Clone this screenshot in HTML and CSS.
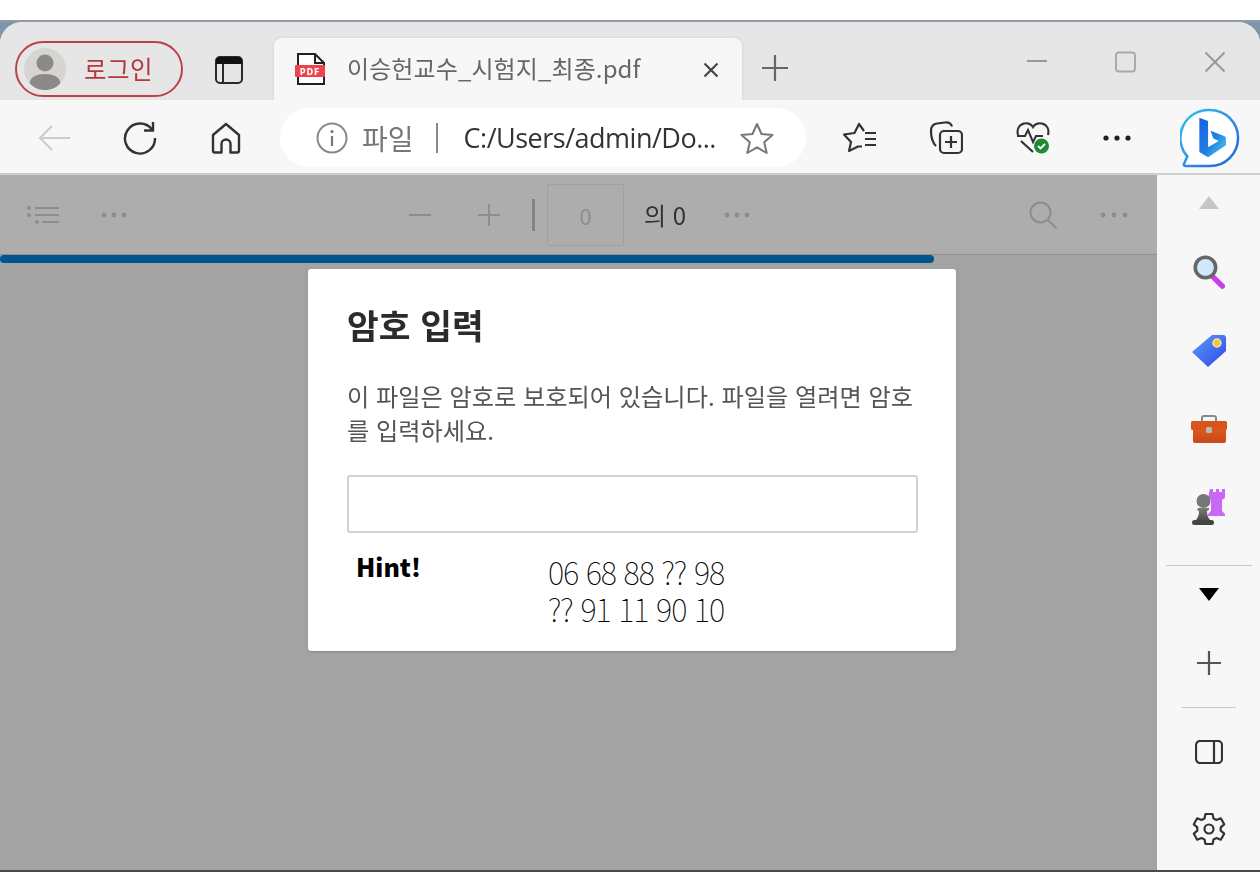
FILE: index.html
```html
<!DOCTYPE html>
<html lang="ko">
<head>
<meta charset="utf-8">
<title>이승헌교수_시험지_최종.pdf</title>
<link rel="stylesheet" href="styles.css">
</head>
<body>
<div class="desktop">
<div class="window">
  <header class="tabstrip">
    <div class="profile">
      <svg class="avatar" width="42" height="42" viewBox="0 0 42 42"><circle cx="21" cy="21" r="21" fill="#d6d5d2"/><circle cx="21" cy="15" r="8.500" fill="#8b8a88"/><path d="M5.500 35c1-6 7-9 15.500-9s14.500 3 15.500 9c-3.500 4.500-9.500 7-15.500 7s-12-2.500-15.500-7z" fill="#8b8a88"/></svg>
      <span class="profile-name">로그인</span>
    </div>
    <svg class="tabs-icon" width="28" height="28" viewBox="0 0 28 28"><rect x="1" y="1" width="26" height="26" rx="4" fill="none" stroke="#2a2a2a" stroke-width="2"/><path d="M1 5a4 4 0 0 1 4-4h18a4 4 0 0 1 4 4v3H1z" fill="#111"/><path d="M8 8v19" stroke="#2a2a2a" stroke-width="2"/></svg>
    <div class="tab">
      <svg class="pdf-icon" width="32" height="32" viewBox="0 0 32 32"><path d="M3 1h17l9 9v21H3z" fill="#fff" stroke="#222" stroke-width="2"/><path d="M20 1v9h9" fill="none" stroke="#222" stroke-width="2"/><rect y="12" width="30" height="12" rx="1" fill="#f0424c"/><text x="15" y="21.500" class="pdf-label" text-anchor="middle">PDF</text></svg>
      <span class="tab-title">이승헌교수_시험지_최종.pdf</span>
      <svg class="tab-close" width="16" height="16" viewBox="0 0 16 16"><path d="M1.500 1.500l13 13M14.500 1.500l-13 13" stroke="#444" stroke-width="2.200"/></svg>
    </div>
    <svg class="new-tab" width="28" height="28" viewBox="0 0 28 28"><path d="M14 1v26M1 14h26" stroke="#666" stroke-width="2.200"/></svg>
    <div class="controls">
      <svg width="22" height="22" viewBox="0 0 22 22"><path d="M1 10h20" stroke="#999" stroke-width="2"/></svg>
      <svg class="ctrl-max" width="22" height="22" viewBox="0 0 22 22"><rect x="2" y="1.500" width="19" height="19" rx="3" fill="none" stroke="#aaa" stroke-width="2"/></svg>
      <svg class="ctrl-close" width="22" height="22" viewBox="0 0 22 22"><path d="M1.500 1.500l19 19M20.500 1.500l-19 19" stroke="#999" stroke-width="2"/></svg>
    </div>
  </header>

  <nav class="toolbar">
    <svg class="back" width="34" height="28" viewBox="0 0 34 28"><path d="M33 14H3M15 2L3 14l12 12" fill="none" stroke="#ccc" stroke-width="2"/></svg>
    <svg class="reload" width="34" height="34" viewBox="0 0 34 34"><path d="M29 8.500A15 15 0 1 0 32 17" fill="none" stroke="#333" stroke-width="2.400"/><path d="M21 9.500h9V1" fill="none" stroke="#333" stroke-width="2.400"/></svg>
    <svg class="home" width="30" height="32" viewBox="0 0 30 32"><path d="M15 2L2 13v15.500a2 2 0 0 0 2 2h6.500V22a4.500 4.500 0 0 1 9 0v8.500H26a2 2 0 0 0 2-2V13z" fill="none" stroke="#333" stroke-width="2.400" stroke-linejoin="round"/></svg>
    <div class="address">
      <svg class="info" width="32" height="32" viewBox="0 0 32 32"><circle cx="16" cy="16" r="14.500" fill="none" stroke="#888" stroke-width="2"/><circle cx="16" cy="9.500" r="1.600" fill="#777"/><path d="M16 14v10" stroke="#777" stroke-width="2.200"/></svg>
      <span class="site">파일</span>
      <i class="site-sep"></i>
      <span class="url">C:/Users/admin/Do...</span>
      <svg class="star" width="34" height="32" viewBox="0 0 34 32"><path d="M17 2l4.500 10 11 1-8.300 7.200 2.500 10.800-9.700-5.700-9.700 5.700 2.500-10.800L1.500 13l11-1z" fill="none" stroke="#777" stroke-width="2" stroke-linejoin="round"/></svg>
    </div>
    <svg class="fav" width="34" height="32" viewBox="0 0 34 32"><path d="M21 9L16 2l-4.500 9L1 12.500 8 20l-2 9 9-4.500h4" fill="none" stroke="#333" stroke-width="2.200" stroke-linejoin="round"/><path d="M22 11h11M22 17h11M22 23h11" stroke="#333" stroke-width="2.200"/></svg>
    <svg class="coll" width="34" height="34" viewBox="0 0 34 34"><path d="M7 25C4 22 2 16 2 10c0-4 2-7 6-7.500L16 1.500c3-.3 6 1 7 4" fill="none" stroke="#333" stroke-width="2.200"/><rect x="11" y="10" width="22" height="22" rx="4" fill="#f7f7f7" stroke="#333" stroke-width="2.200"/><path d="M22 15v12M16 21h12" stroke="#333" stroke-width="2.200"/></svg>
    <svg class="health" width="34" height="34" viewBox="0 0 34 34"><path d="M2 14C-1 2 13-1 17 6c4-7 18-4 15 8M5 20l12 11" fill="none" stroke="#333" stroke-width="2.200"/><path d="M1 15h8l3-6 5 12 3-6h7" fill="none" stroke="#333" stroke-width="2"/><circle cx="25.500" cy="25" r="7.500" fill="#1d8a36"/><path d="M22 25l2.500 2.500 4.500-4.500" fill="none" stroke="#fff" stroke-width="1.800"/></svg>
    <svg class="more" width="28" height="6" viewBox="0 0 28 6"><circle cx="3" cy="3" r="2.600" fill="#222"/><circle cx="14" cy="3" r="2.600" fill="#222"/><circle cx="25" cy="3" r="2.600" fill="#222"/></svg>
    <svg class="bing" width="60" height="60" viewBox="0 0 62 62">
      <defs>
        <linearGradient id="bingRing" x1="0" y1="0" x2="1" y2="1"><stop offset="0" stop-color="#35c1f1"/><stop offset="1" stop-color="#2a5fd8"/></linearGradient>
        <linearGradient id="bingB" x1="0" y1="0" x2="1" y2="1"><stop offset="0" stop-color="#1b5fdc"/><stop offset=".55" stop-color="#1f7fe6"/><stop offset="1" stop-color="#55d4ea"/></linearGradient>
      </defs>
      <path d="M31 2a29 29 0 0 1 0 58H5.500c-1.500-.3-2-1.500-1-3l3-7A29 29 0 0 1 31 2z" fill="#fff" stroke="url(#bingRing)" stroke-width="2.600"/>
      <path d="M20 10l9 3.500v27l11-6.500-5.500-2.500-3-8 14 5.500c1.500.6 2 1.500 2 3v6.500L29 51l-9-5.500z" fill="url(#bingB)"/>
    </svg>
  </nav>

  <div class="body">
    <main class="pane">
      <div class="pdfbar">
        <svg class="pb-list" width="32" height="18" viewBox="0 0 32 18"><g fill="#8d8d8d"><circle cx="2" cy="2" r="2"/><circle cx="2" cy="9" r="2"/><circle cx="10" cy="16" r="2"/></g><path d="M8 2h24M8 9h24M15 16h17" stroke="#8d8d8d" stroke-width="2"/></svg>
        <svg class="pb-dots" width="26" height="6" viewBox="0 0 26 6"><g fill="#8d8d8d"><circle cx="3" cy="3" r="2.400"/><circle cx="13" cy="3" r="2.400"/><circle cx="23" cy="3" r="2.400"/></g></svg>
        <svg class="pb-minus" width="22" height="4" viewBox="0 0 22 4"><path d="M0 2h22" stroke="#8d8d8d" stroke-width="2"/></svg>
        <svg class="pb-plus" width="22" height="22" viewBox="0 0 22 22"><path d="M11 0v22M0 11h22" stroke="#8d8d8d" stroke-width="2"/></svg>
        <i class="pb-sep"></i>
        <span class="pb-page">0</span>
        <span class="pb-total">의 0</span>
        <svg class="pb-dots pb-dots-mid" width="26" height="6" viewBox="0 0 26 6"><g fill="#8d8d8d"><circle cx="3" cy="3" r="2.400"/><circle cx="13" cy="3" r="2.400"/><circle cx="23" cy="3" r="2.400"/></g></svg>
        <svg class="pb-search" width="28" height="28" viewBox="0 0 28 28"><circle cx="11.500" cy="11.500" r="10" fill="none" stroke="#8d8d8d" stroke-width="2"/><path d="M18.500 18.500l9 9" stroke="#8d8d8d" stroke-width="2"/></svg>
        <svg class="pb-dots pb-dots-end" width="28" height="6" viewBox="0 0 28 6"><g fill="#8d8d8d"><circle cx="3" cy="3" r="2.400"/><circle cx="14" cy="3" r="2.400"/><circle cx="25" cy="3" r="2.400"/></g></svg>
      </div>
      <div class="progress"></div>

      <section class="dialog">
        <h1 class="dialog-title">암호 입력</h1>
        <p class="dialog-text">이 파일은 암호로 보호되어 있습니다. 파일을 열려면 암호를 입력하세요.</p>
        <input class="dialog-input" type="password" aria-label="암호">
        <div class="hint">
          <strong class="hint-label">Hint!</strong>
          <p class="hint-code">06 68 88 ?? 98<br>?? 91 11 90 10</p>
        </div>
      </section>
    </main>

    <aside class="sidebar">
      <i class="tri-up"></i>
      <svg class="sb-search" width="32" height="34" viewBox="0 0 36 38"><path d="M23 25l10 10" stroke="#c93fe8" stroke-width="6" stroke-linecap="round"/><circle cx="14" cy="14" r="11.500" fill="#cfe9fa" stroke="#666" stroke-width="4"/></svg>
      <svg class="sb-tag" width="36" height="34" viewBox="0 0 36 34"><defs><linearGradient id="tagFill" x1="0" y1="0" x2="1" y2="1"><stop offset="0" stop-color="#5aa0f5"/><stop offset="1" stop-color="#2f45ec"/></linearGradient></defs><path d="M21 1h11a3 3 0 0 1 3 3v13L17 33 1 18z" fill="url(#tagFill)"/><circle cx="26" cy="9" r="4" fill="#e8c94a" stroke="#f8e69a" stroke-width="1.500"/></svg>
      <svg class="sb-box" width="36" height="28" viewBox="0 0 36 28"><defs><linearGradient id="boxFill" x1="0" y1="0" x2="0" y2="1"><stop offset="0" stop-color="#e8661e"/><stop offset="1" stop-color="#c9481a"/></linearGradient></defs><path d="M11 7V3a2 2 0 0 1 2-2h10a2 2 0 0 1 2 2v4" fill="none" stroke="#8a8a8a" stroke-width="2"/><rect x="2" y="6" width="33" height="22" rx="2" fill="url(#boxFill)"/><rect y="6" width="36" height="9" rx="1.500" fill="#d9541a"/><rect x="15" y="12" width="6" height="6" rx="1.500" fill="#b9b9b9"/></svg>
      <svg class="sb-chess" width="36" height="38" viewBox="0 0 36 38"><defs><linearGradient id="pawnFill" x1="0" y1="0" x2="0" y2="1"><stop offset="0" stop-color="#7d7d7d"/><stop offset="1" stop-color="#3f3f3f"/></linearGradient></defs><path d="M19 1h3v3h3V1h3v3h3V1h3v9l-3 2v11l3 3v2H17v-2l3-3V12l-3-2z" fill="#c868f5"/><circle cx="12.500" cy="13" r="7" fill="#777"/><path d="M7 20h11v2l-2 1c0 4 1 6 3 9v3H5v-3c2-3 3-5 3-9l-2-1z" fill="url(#pawnFill)"/><rect x="1" y="32" width="22" height="5" rx="2.500" fill="#444"/></svg>
      <i class="sb-rule sb-rule-wide"></i>
      <i class="tri-down"></i>
      <svg class="sb-plus" width="24" height="24" viewBox="0 0 24 24"><path d="M12 0v24M0 12h24" stroke="#555" stroke-width="2.200"/></svg>
      <i class="sb-rule sb-rule-short"></i>
      <svg class="sb-panel" width="28" height="24" viewBox="0 0 28 24"><rect x="1" y="1" width="26" height="22" rx="4" fill="none" stroke="#333" stroke-width="2.200"/><path d="M19 1v22" stroke="#333" stroke-width="2.200"/></svg>
      <svg class="sb-gear" width="34" height="34" viewBox="0 0 34 34"><path d="M13.500 2h7l1 4.500 3 1.500 4.300-1.700 3.400 6-3.500 3v3.400l3.500 3-3.400 6-4.300-1.700-3 1.500-1 4.500h-7l-1-4.500-3-1.500-4.300 1.700-3.400-6 3.500-3v-3.400l-3.500-3 3.400-6L9.500 8l3-1.500z" fill="none" stroke="#333" stroke-width="2.200" stroke-linejoin="round"/><circle cx="17" cy="17" r="4.500" fill="none" stroke="#333" stroke-width="2.200"/></svg>
    </aside>
  </div>
</div>
</div>
</body>
</html>
```
FILE: styles.css
```css
* { box-sizing: border-box; }
html, body { margin: 0; padding: 0; background: #fff; }
body { font-family: "Noto Sans CJK KR", "Noto Sans", sans-serif; width: 1260px; height: 891px; overflow: hidden; }
svg { display: block; flex: none; }
i { display: block; flex: none; }

.desktop { margin-top: 20px; height: 852px; background: #7d95ad; border-top: 2px solid #8f9ba8; border-bottom: 2px solid #444b52; }
.window { height: 848px; display: flex; flex-direction: column; border-radius: 22px 22px 0 0; overflow: hidden; background: #f7f7f7; }

.tabstrip { height: 78px; flex: none; background: #e6e6e6; display: flex; align-items: flex-start; padding-left: 15px; filter: blur(.4px); }
.profile { width: 168px; height: 56px; margin-top: 19px; border: 2px solid #bb4248; border-radius: 28px; display: flex; align-items: center; padding-left: 7px; }
.profile-name { margin-left: 18px; font-size: 24.500px; line-height: 1; color: #b5383e; letter-spacing: .5px; }
.tabs-icon { margin: 34px 0 0 32px; }
.tab { width: 468px; height: 62px; margin: 16px 0 0 31px; background: #f7f7f7; border-radius: 8px 8px 0 0; display: flex; align-items: center; padding-left: 21px; box-shadow: 0 0 3px rgba(0,0,0,.12); }
.pdf-label { font: 700 8px "DejaVu Sans", sans-serif; fill: #fff; letter-spacing: .8px; }
.tab-title { margin-left: 20px; margin-bottom: 3px; font-size: 24px; letter-spacing: .1px; line-height: 1; color: #666; white-space: nowrap; }
.tab-close { margin-left: auto; margin-right: 23px; margin-top: 2px; }
.new-tab { margin: 32px 0 0 19px; }
.controls { margin-left: auto; margin-top: 29px; margin-right: 34px; display: flex; }
.ctrl-max { margin-left: 66px; }
.ctrl-close { margin-left: 68px; }

.toolbar { height: 75px; flex: none; background: #f7f7f7; display: flex; align-items: center; padding: 2px 0 0 37px; border-bottom: 2px solid #cdcdcd; filter: blur(.4px); }
.reload { margin-left: 52px; }
.home { margin-left: 54px; }
.address { width: 526px; height: 59px; margin-left: 39px; background: #fff; border-radius: 30px; display: flex; align-items: center; padding-left: 36px; }
.site { margin-left: 14px; font-size: 28px; line-height: 1; color: #777; }
.site-sep { width: 2px; height: 30px; margin-left: 22px; background: #888; }
.url { margin-left: 26px; font: 27px/1 "Open Sans", sans-serif; letter-spacing: -.5px; color: #333; white-space: nowrap; }
.star { margin-left: 24px; }
.fav { margin-left: 37px; }
.coll { margin-left: 52px; }
.health { margin-left: 53px; }
.more { margin-left: 53px; }
.bing { margin-left: 49px; }

.body { flex: 1; min-height: 0; display: flex; }
.pane { flex: 1; position: relative; background: #a3a3a3; }
.pdfbar { height: 80px; background: #adadad; display: flex; align-items: center; padding-left: 27px; border-bottom: 1px solid #8f8f8f; filter: blur(.4px); }
.pb-dots { margin-left: 42px; }
.pb-minus { margin-left: 282px; }
.pb-plus { margin-left: 47px; }
.pb-sep { width: 3px; height: 32px; margin-left: 32px; background: #858585; }
.pb-page { width: 77px; height: 62px; margin-left: 12px; border: 1px solid #a0a0a0; border-radius: 2px; display: flex; align-items: center; justify-content: center; font-size: 22px; color: #8d8d8d; }
.pb-total { margin-left: 20px; font-size: 24px; line-height: 1; color: #333; }
.pb-dots-mid { margin-left: 38px; }
.pb-search { margin-left: auto; }
.pb-dots-end { margin-left: 43px; margin-right: 29px; }
.progress { width: 934px; height: 8px; background: #00558f; border-radius: 4px; }

.dialog { position: absolute; left: 308px; top: 94px; width: 648px; height: 382px; padding: 0 39px; background: #fff; border-radius: 3px; box-shadow: 0 1px 2px rgba(0,0,0,.2); }
.dialog-title { margin: 31px 0 0; font-size: 34.500px; line-height: 48px; font-weight: 700; color: #2b2b2b; filter: blur(.4px); }
.dialog-text { margin: 31px 0 0; font-size: 24.200px; line-height: 34px; color: #555; filter: blur(.4px); }
.dialog-input { display: block; width: 571px; height: 58px; margin-top: 28px; border: 2px solid #d2d2d2; border-radius: 3px; background: #fff; }
.hint { display: flex; margin-top: 13px; padding-left: 9px; }
.hint-label { font-size: 25px; line-height: 40px; font-weight: 900; color: #000; }
.hint-code { margin: 7px 0 0 127px; font-size: 31px; line-height: 37px; font-weight: 100; letter-spacing: -1.050px; color: #000; white-space: nowrap; }

.sidebar { width: 103px; flex: none; background: #f7f7f7; display: flex; flex-direction: column; align-items: center; border-bottom-right-radius: 10px; filter: blur(.4px); }
.tri-up { margin-top: 21px; width: 0; height: 0; border: 10px solid transparent; border-top: 0; border-bottom: 13px solid #c6c6c6; }
.sb-search { margin-top: 46px; }
.sb-tag { margin-top: 45px; }
.sb-box { margin-top: 47px; }
.sb-chess { margin-top: 45px; }
.sb-rule { height: 1px; background: #c8c8c8; }
.sb-rule-wide { width: 86px; margin-top: 39px; }
.tri-down { margin-top: 22px; width: 0; height: 0; border: 10px solid transparent; border-bottom: 0; border-top: 13px solid #000; }
.sb-plus { margin-top: 50px; }
.sb-rule-short { width: 54px; margin-top: 32px; }
.sb-panel { margin-top: 32px; }
.sb-gear { margin-top: 48px; }
```
